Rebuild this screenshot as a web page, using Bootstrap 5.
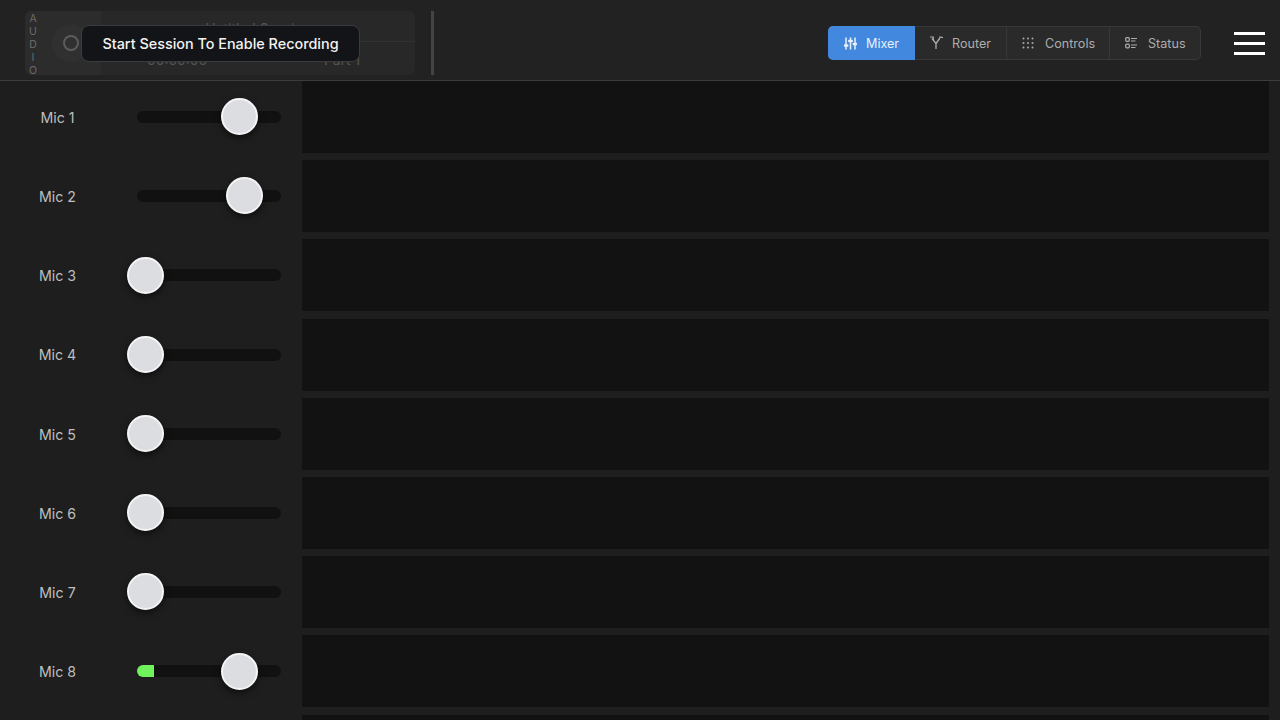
<!DOCTYPE html>
<html lang="en">
<head>
    <meta charset="UTF-8">
    <meta name="viewport" content="width=device-width, initial-scale=1.0">
    <title>Mixer</title>
    <link href="https://cdn.jsdelivr.net/npm/bootstrap@5.3.0/dist/css/bootstrap.min.css" rel="stylesheet">
    <style>
        html, body { height: 100%; overflow: hidden; }
        body { background: #1e1e1e; font-family: Inter, "Liberation Sans", sans-serif; }
        .top-bar { height: 81px; background: #222222; border-bottom: 1px solid #3d3d3d; padding: 11px 15px 0 25px; }
        .session { width: 390px; height: 64px; background: #282828; border-radius: 6px; position: relative; flex: none; }
        .audio-col { width: 16px; background: #2c2c2c; color: #6b6b6b; font-size: 10.5px; line-height: 13px; border-radius: 6px 0 0 6px; padding-top: 1px; }
        .rec-col { width: 60px; background: #2c2c2c; }
        .rec-ring { width: 38px; height: 38px; border-radius: 50%; background: #303030; }
        .rec-dot { width: 16px; height: 16px; border-radius: 50%; border: 2px solid #5c5c5c; }
        .session-info { color: #555; font-size: 13.8px; }
        .session-line { height: 31px; border-bottom: 1px solid #323232; padding-top: 8px; }
        .session-foot { height: 33px; padding: 8px 55px 0 46px; }
        .start-tip { position: absolute; left: 56px; top: 14px; width: 279px; height: 37px; background: #131417; border: 1px solid #3a3b3e; border-radius: 8px; color: #f2f2f2; font-size: 14.4px; font-weight: 500; }
        .divider { width: 3px; height: 64px; background: #444; margin-left: 16px; flex: none; }
        .mode-group { margin-top: 15px; height: 34px; margin-right: 33px; border-radius: 5px; background: #2a2a2a; box-shadow: inset 0 0 0 1px #383838; overflow: hidden; }
        .mode-btn { height: 100%; flex: none; border-radius: 0; border: 0; border-right: 1px solid #383838; background: transparent; color: #adadad; font-size: 12.6px; padding: 2px 0 0 15px; gap: 10px; }
        .mode-btn:last-child { border-right: 0; }
        .mode-btn.active, .mode-btn.active:hover { background: #4288df; color: #e8f0fb; border-right-color: #4288df; }
        .mode-btn svg { flex: none; margin-top: -2px; }
        .w-mixer { width: 87px; padding-left: 16px; gap: 9px; }
        .w-router { width: 92px; padding-left: 14px; gap: 8px; }
        .w-controls { width: 103px; gap: 11px; }
        .w-status { width: 91px; gap: 11px; }
        .burger { width: 31px; margin-top: 21px; gap: 7px; }
        .burger span { height: 3px; background: #fff; display: block; }
        #tracks { height: 639px; overflow: hidden; }
        .track-row { height: 72px; margin-bottom: 7.2px; padding-right: 11px; }
        .mic-name { width: 115px; padding-top: 1px; color: #bebebe; font-size: 14.2px; text-align: center; }
        .mic-slider { width: 144px; height: 12px; margin-left: 22px; background: #111111; border-radius: 6px; position: relative; flex: none; }
        .mic-level { height: 12px; background: #6ff25c; border-radius: 6px 0 0 6px; }
        .mic-thumb { position: absolute; top: 50%; width: 37px; height: 37px; margin: -18.75px 0 0 -18.5px; background: #dcdde1; border: 2px solid #f4f4f6; border-radius: 50%; box-shadow: 0 3px 7px rgba(0,0,0,.55); }
        .track-lane { background: #121212; height: 72px; margin-left: 21px; }
    </style>
</head>
<body>
    <header class="top-bar d-flex">
        <div class="session d-flex">
            <div class="audio-col text-center">A<br>U<br>D<br>I<br>O</div>
            <div class="rec-col d-flex align-items-center justify-content-center">
                <div class="rec-ring d-flex align-items-center justify-content-center"><div class="rec-dot"></div></div>
            </div>
            <div class="session-info flex-grow-1">
                <div class="session-line text-center">Untitled Session</div>
                <div class="session-foot d-flex justify-content-between"><span>00:00:00</span><span>Part 1</span></div>
            </div>
            <div class="start-tip d-flex align-items-center justify-content-center">Start Session To Enable Recording</div>
        </div>
        <div class="divider"></div>
        <div class="flex-grow-1"></div>
        <div class="mode-group d-flex" role="group">
            <button class="mode-btn w-mixer btn active d-flex align-items-center">
                <svg width="13" height="13" viewBox="0 0 13 13" fill="none" stroke="currentColor" stroke-width="1.5" stroke-linecap="round"><path d="M2 1v11M6.5 1v11M11 1v11"/><path d="M.8 8.5h2.4M5.3 4h2.4M9.8 7h2.4" stroke-width="2.6"/></svg>Mixer
            </button>
            <button class="mode-btn w-router btn d-flex align-items-center">
                <svg width="15" height="14" viewBox="0 0 15 14" fill="none" stroke="currentColor" stroke-width="1.3"><path d="M7 13V7.5L3 2.5M7 7.5l3.6-5"/><path d="M1 1h3.4v3M10.2 3.4 11 1l3 .6" stroke-width="1.1"/></svg>Router
            </button>
            <button class="mode-btn w-controls btn d-flex align-items-center">
                <svg width="12" height="12" viewBox="0 0 12 12" fill="currentColor"><circle cx="1.5" cy="1.5" r="1"/><circle cx="6" cy="1.5" r="1"/><circle cx="10.5" cy="1.5" r="1"/><circle cx="1.5" cy="6" r="1"/><circle cx="6" cy="6" r="1"/><circle cx="10.5" cy="6" r="1"/><circle cx="1.5" cy="10.5" r="1"/><circle cx="6" cy="10.5" r="1"/><circle cx="10.5" cy="10.5" r="1"/></svg>Controls
            </button>
            <button class="mode-btn w-status btn d-flex align-items-center">
                <svg width="12" height="12" viewBox="0 0 12 12" fill="none" stroke="currentColor" stroke-width="1.2"><rect x=".7" y=".7" width="3.6" height="3.6" rx="1"/><rect x=".7" y="7.2" width="3.6" height="3.6" rx="1"/><path d="M6 1.5H12M6 4H10.5M6 8H12M6 10.5H10.5"/></svg>Status
            </button>
        </div>
        <div class="burger d-flex flex-column"><span></span><span></span><span></span></div>
    </header>

    <main id="tracks"></main>

    <script>
        // thumb position in px from the track's left edge, level in px
        const mics = [
            ["Mic 1", 102, 0], ["Mic 2", 107.5, 0], ["Mic 3", 8, 0], ["Mic 4", 8, 0],
            ["Mic 5", 8, 0], ["Mic 6", 8, 0], ["Mic 7", 8, 0], ["Mic 8", 102, 17], ["", 0, 0]
        ];
        document.getElementById("tracks").innerHTML = mics.map(([name, pos, level]) => `
            <div class="track-row d-flex align-items-center">
                ${name ? `<div class="mic-name">${name}</div>
                <div class="mic-slider">
                    <div class="mic-level" style="width:${level}px"></div>
                    <div class="mic-thumb" style="left:${pos}px"></div>
                </div>` : `<div class="mic-name"></div><div class="mic-slider invisible"></div>`}
                <div class="track-lane flex-grow-1"></div>
            </div>`).join("");
    </script>
    <script src="https://cdn.jsdelivr.net/npm/bootstrap@5.3.0/dist/js/bootstrap.bundle.min.js"></script>
</body>
</html>
